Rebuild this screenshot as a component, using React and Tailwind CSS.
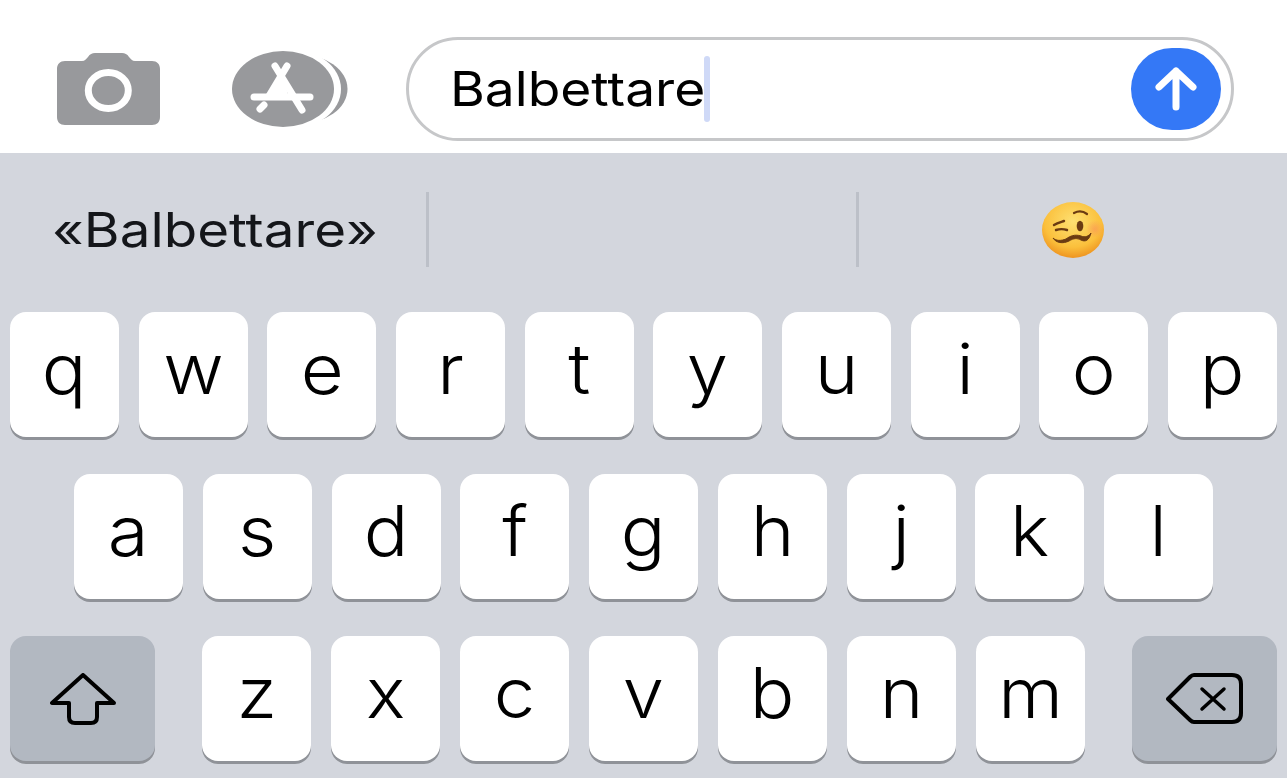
const FONT = 'font-["Inter","Noto_Sans",sans-serif]';

function Camera() {
  return (
    <svg width="103" height="72" viewBox="57 53 103 72" className="shrink-0">
      <path d="M65 61H82C85 61 86 59 88 57C90 54 92 53 95 53H122C125 53 127 54 129 57C131 59 132 61 135 61H152C157 61 160 64 160 69V117C160 122 157 125 152 125H65C60 125 57 122 57 117V69C57 64 60 61 65 61Z" fill="#98999c" />
      <ellipse cx="108.3" cy="90.5" rx="20" ry="18" fill="none" stroke="#fff" strokeWidth="7" />
    </svg>
  );
}

function AppStore() {
  return (
    <svg width="116" height="76" viewBox="232 51 116 76" className="shrink-0">
      <ellipse cx="298" cy="89" rx="49.5" ry="35" fill="#98999c" />
      <ellipse cx="290" cy="89" rx="51" ry="40" fill="#fff" />
      <ellipse cx="283" cy="89" rx="51" ry="38" fill="#98999c" />
      <g stroke="#fff" strokeWidth="7" strokeLinecap="round" fill="none">
        <path d="M287 66L269 96" />
        <path d="M275 66L302 110" />
        <path d="M254 97H310" />
        <path d="M264 105L260 109" />
      </g>
      <path d="M281 74L268 97H289Z" fill="#fff" />
    </svg>
  );
}

function Composer() {
  return (
    <div className="h-[153px] bg-white flex items-center pt-[25px] pl-[57px] pr-[53px]">
      <div className="mr-[72px] flex"><Camera /></div>
      <div className="mr-[58px] flex"><AppStore /></div>
      <div className="flex-1 h-[104px] rounded-full border-[3px] border-[#c6c7c9] flex items-center pl-[41px] pr-[10px]">
        <div className="flex-1 flex items-center">
          <span className="inline-block origin-left scale-x-[1.11] text-[48px] leading-none text-black">Balbettare</span>
          <span className="w-[6px] h-[66px] rounded-full bg-[#cfd9f7] ml-[24px]" />
        </div>
        <div className="w-[90px] h-[82px] rounded-full bg-[#3478f6] flex items-center justify-center">
          <svg width="46" height="50" viewBox="0 0 46 50">
            <path d="M23 7V43M6 23L23 7L40 23" fill="none" stroke="#fff" strokeWidth="7" strokeLinecap="round" strokeLinejoin="round" />
          </svg>
        </div>
      </div>
    </div>
  );
}

function Emoji() {
  return (
    <svg width="64" height="58" viewBox="0 0 64 58">
      <defs>
        <radialGradient id="face" cx="0.5" cy="0.35" r="0.65">
          <stop offset="0" stopColor="#fde072" />
          <stop offset="0.7" stopColor="#fbc03c" />
          <stop offset="1" stopColor="#ee9420" />
        </radialGradient>
        <radialGradient id="blush" cx="0.5" cy="0.5" r="0.5">
          <stop offset="0" stopColor="#f9905a" stopOpacity="0.6" />
          <stop offset="1" stopColor="#f9905a" stopOpacity="0" />
        </radialGradient>
      </defs>
      <ellipse cx="32" cy="29" rx="31" ry="28" fill="url(#face)" />
      <ellipse cx="54" cy="28" rx="9" ry="9" fill="url(#blush)" />
      <g fill="none" stroke="#6b3b12" strokeLinecap="round">
        <path d="M33 12C37 10 42 10 46 13" strokeWidth="2.2" />
        <path d="M13 24C16 22 20 21 23 20" strokeWidth="2.4" />
        <path d="M15 29C18 28 23 28 26 29" strokeWidth="2.4" />
      </g>
      <ellipse cx="39" cy="25" rx="3.3" ry="5.3" fill="#6b3b12" />
      <path d="M12 37C15 42 22 43 28 40C33 37 36 37 40 39C44 41 48 40 50 32C48 35 44 37 40 35C34 33 29 35 25 38C20 40 15 40 12 37Z" fill="#6b3b12" stroke="#6b3b12" strokeWidth="1" strokeLinejoin="round" />
    </svg>
  );
}

function Suggestions() {
  return (
    <div className="flex pt-[39px] pb-[45px]">
      <div className="w-[426px] h-[75px] flex items-center justify-center text-[48px] leading-none text-[#14161a]">
        <span className="inline-block scale-x-[1.14] ml-[3px]">«Balbettare»</span>
      </div>
      <div className="w-[3px] h-[75px] bg-[#bcc0c8]" />
      <div className="w-[427px] h-[75px]" />
      <div className="w-[3px] h-[75px] bg-[#bcc0c8]" />
      <div className="flex-1 h-[75px] flex items-center justify-center"><Emoji /></div>
    </div>
  );
}

function Key({ label }) {
  return (
    <div className="w-[109px] h-[125px] rounded-[16px] bg-white shadow-[0_3px_0_#8f9298] flex items-center justify-center text-[70px] font-[350] leading-none text-black pb-[12px]">
      <span className="inline-block scale-x-[1.06]">{label}</span>
    </div>
  );
}

function ActionKey({ children }) {
  return (
    <div className="w-[145px] h-[125px] rounded-[16px] bg-[#b2b8c1] shadow-[0_3px_0_#8f9298] flex items-center justify-center">
      {children}
    </div>
  );
}

function Keyboard() {
  return (
    <div className="flex flex-col gap-[37px]">
      <div className="flex justify-between px-[10px]">
        {["q", "w", "e", "r", "t", "y", "u", "i", "o", "p"].map((k) => <Key key={k} label={k} />)}
      </div>
      <div className="flex justify-between pl-[74px] pr-[74px]">
        {["a", "s", "d", "f", "g", "h", "j", "k", "l"].map((k) => <Key key={k} label={k} />)}
      </div>
      <div className="flex justify-between px-[10px]">
        <ActionKey>
          <svg width="66" height="52" viewBox="50 673 66 52">
            <path d="M83 675L52 703H69V717C69 721 71 723 75 723H91C95 723 97 721 97 717V703H114Z" fill="none" stroke="#000" strokeWidth="4" strokeLinejoin="round" />
          </svg>
        </ActionKey>
        <div className="flex gap-[20px]">
          {["z", "x", "c", "v", "b", "n", "m"].map((k) => <Key key={k} label={k} />)}
        </div>
        <ActionKey>
          <svg width="78" height="52" viewBox="1165 673 78 52">
            <path d="M1167 699L1189 677C1190 676 1191 675 1193 675H1231C1237 675 1240 678 1240 684V713C1240 719 1237 722 1231 722H1193C1191 722 1190 721 1189 720Z" fill="none" stroke="#000" strokeWidth="4" strokeLinejoin="round" />
            <path d="M1201 689L1223 709M1223 689L1201 709" fill="none" stroke="#000" strokeWidth="3.5" strokeLinecap="round" />
          </svg>
        </ActionKey>
      </div>
    </div>
  );
}

export default function App() {
  return (
    <div className={`w-[1287px] h-[778px] overflow-hidden bg-[#d3d6dd] ${FONT}`}>
      <Composer />
      <Suggestions />
      <Keyboard />
    </div>
  );
}
